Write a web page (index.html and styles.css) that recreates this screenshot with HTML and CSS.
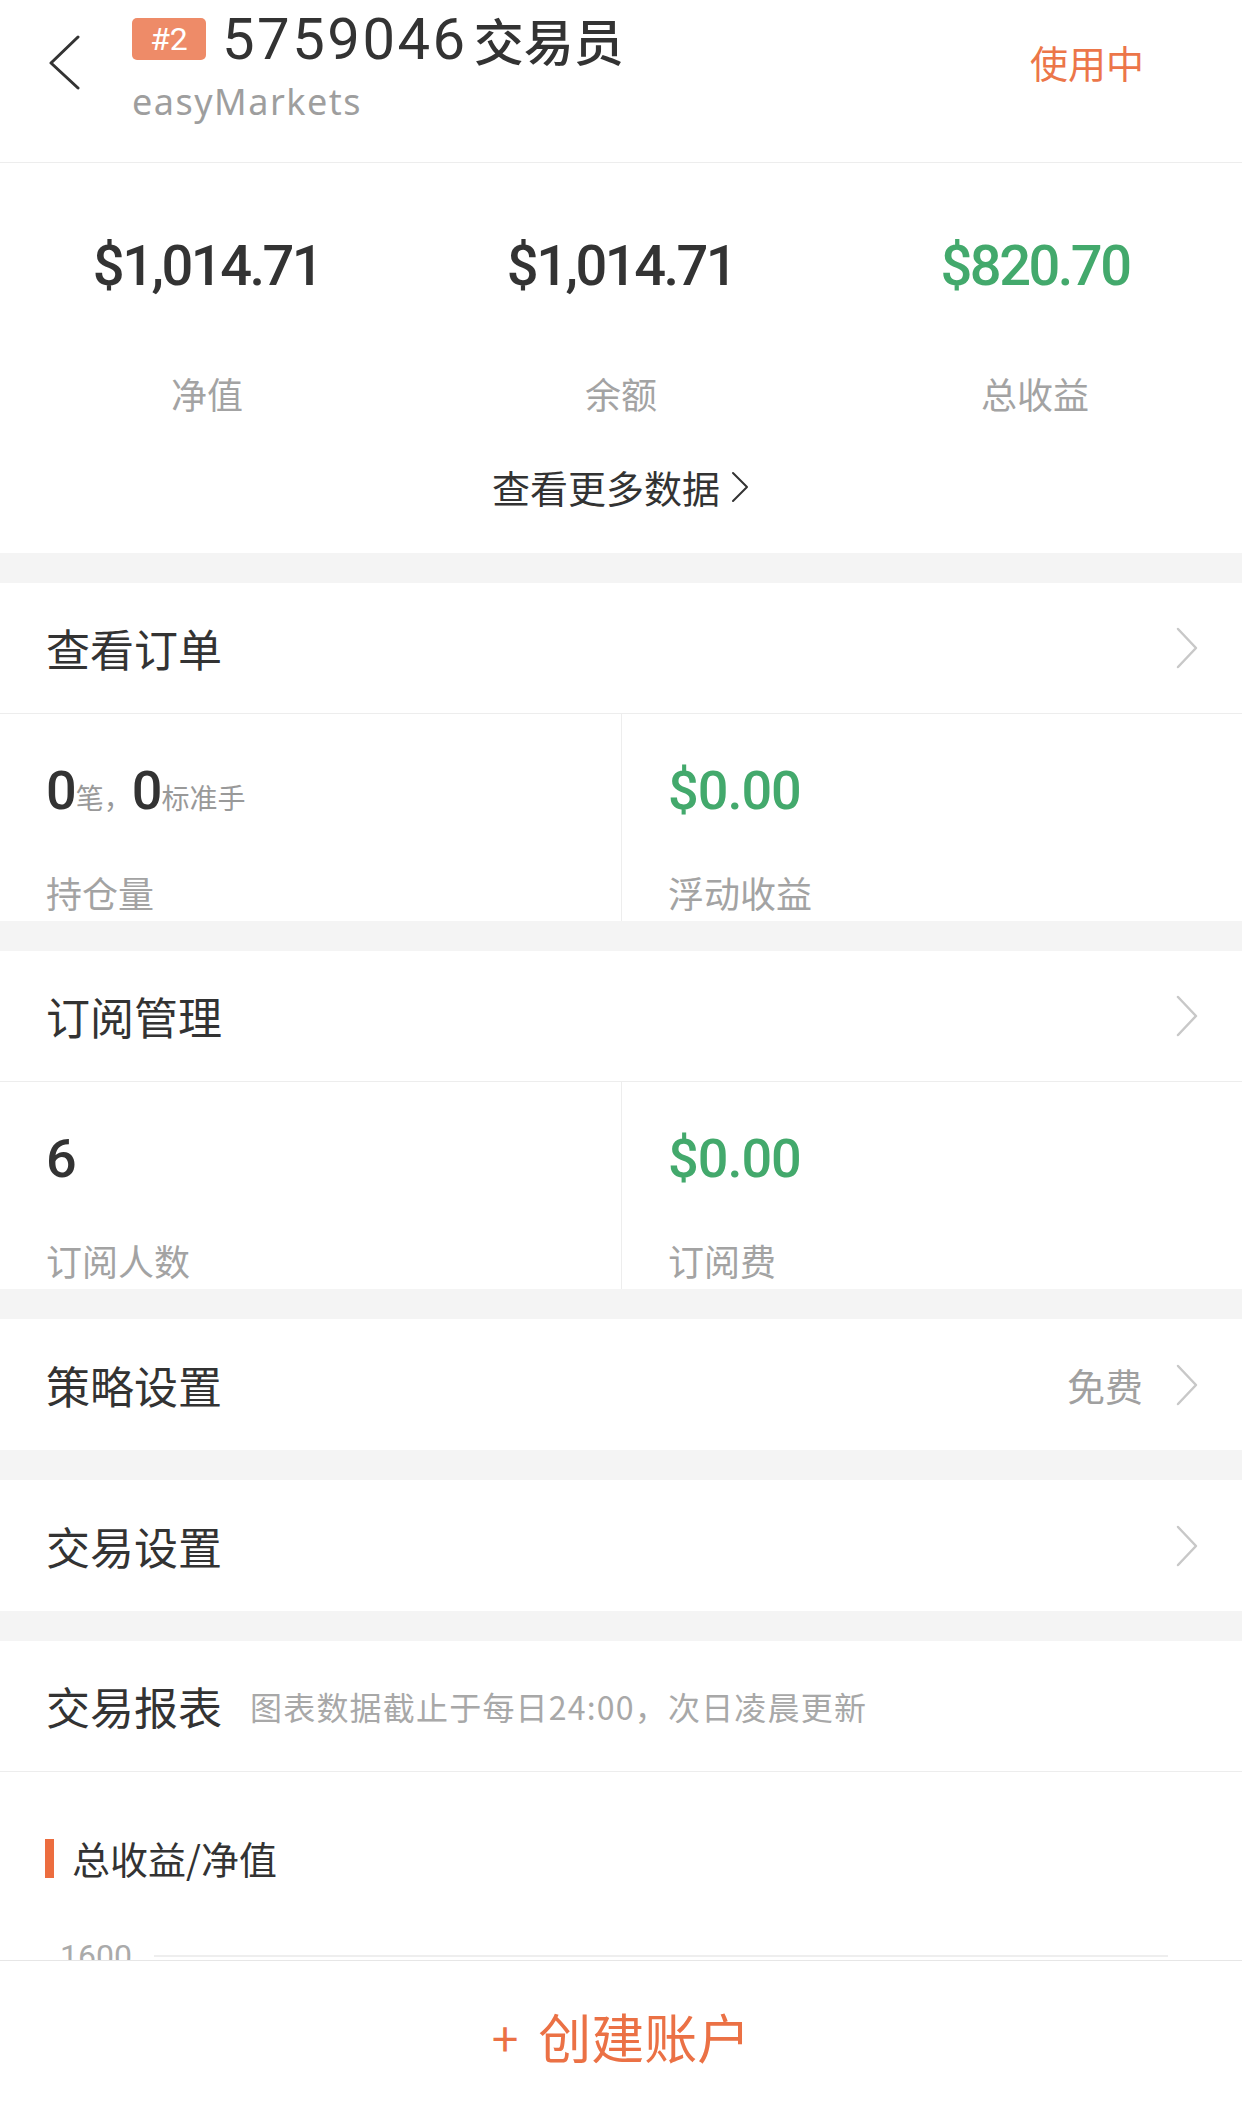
FILE: index.html
```html
<!DOCTYPE html>
<html lang="zh-CN">
<head>
    <meta charset="UTF-8">
    <meta name="viewport" content="width=device-width, initial-scale=1.0">
    <title>账户详情</title>
    <link rel="stylesheet" href="styles.css">
</head>
<body>
<div class="page">
    <div class="scroll">
        <div class="card">
            <header class="top-bar">
                <svg class="back" width="32" height="56" viewBox="0 0 32 56">
                    <path d="M30 2 L3 28 L30 53" fill="none" stroke="#333" stroke-width="3" stroke-linecap="round" stroke-linejoin="round"/>
                </svg>
                <div class="account">
                    <div class="account-title">
                        <span class="badge">#2</span>
                        <span class="account-no">5759046</span>
                        <span class="account-role">交易员</span>
                    </div>
                    <div class="broker">easyMarkets</div>
                </div>
                <div class="status">使用中</div>
            </header>

            <div class="summary">
                <div class="summary-grid">
                    <div class="summary-item">
                        <div class="summary-value">$1,014.71</div>
                        <div class="summary-label">净值</div>
                    </div>
                    <div class="summary-item">
                        <div class="summary-value">$1,014.71</div>
                        <div class="summary-label">余额</div>
                    </div>
                    <div class="summary-item">
                        <div class="summary-value green">$820.70</div>
                        <div class="summary-label">总收益</div>
                    </div>
                </div>
                <div class="more-link">
                    <span>查看更多数据</span>
                    <svg width="20" height="32" viewBox="0 0 20 32">
                        <path d="M3 2 L17 16 L3 30" fill="none" stroke="#333" stroke-width="2" stroke-linecap="round" stroke-linejoin="round"/>
                    </svg>
                </div>
            </div>
        </div>

        <div class="card">
            <div class="cell with-border">
                <span class="cell-title">查看订单</span>
                <svg class="chevron" width="24" height="42" viewBox="0 0 24 42">
                    <path d="M3 2 L21 21 L3 40" fill="none" stroke="#c8c8c8" stroke-width="2.5" stroke-linecap="round" stroke-linejoin="round"/>
                </svg>
            </div>
            <div class="pair">
                <div class="pair-item">
                    <div class="pair-value"><span class="num">0</span><span class="unit">笔，</span><span class="num">0</span><span class="unit">标准手</span></div>
                    <div class="pair-label">持仓量</div>
                </div>
                <div class="pair-item">
                    <div class="pair-value green">$0.00</div>
                    <div class="pair-label">浮动收益</div>
                </div>
            </div>
        </div>

        <div class="card">
            <div class="cell with-border">
                <span class="cell-title">订阅管理</span>
                <svg class="chevron" width="24" height="42" viewBox="0 0 24 42">
                    <path d="M3 2 L21 21 L3 40" fill="none" stroke="#c8c8c8" stroke-width="2.5" stroke-linecap="round" stroke-linejoin="round"/>
                </svg>
            </div>
            <div class="pair">
                <div class="pair-item">
                    <div class="pair-value"><span class="num">6</span></div>
                    <div class="pair-label">订阅人数</div>
                </div>
                <div class="pair-item">
                    <div class="pair-value green">$0.00</div>
                    <div class="pair-label">订阅费</div>
                </div>
            </div>
        </div>

        <div class="card">
            <div class="cell">
                <span class="cell-title">策略设置</span>
                <span class="cell-extra">免费</span>
                <svg class="chevron" width="24" height="42" viewBox="0 0 24 42">
                    <path d="M3 2 L21 21 L3 40" fill="none" stroke="#c8c8c8" stroke-width="2.5" stroke-linecap="round" stroke-linejoin="round"/>
                </svg>
            </div>
        </div>

        <div class="card">
            <div class="cell">
                <span class="cell-title">交易设置</span>
                <svg class="chevron" width="24" height="42" viewBox="0 0 24 42">
                    <path d="M3 2 L21 21 L3 40" fill="none" stroke="#c8c8c8" stroke-width="2.5" stroke-linecap="round" stroke-linejoin="round"/>
                </svg>
            </div>
        </div>

        <div class="card">
            <div class="cell with-border">
                <span class="cell-title">交易报表</span>
                <span class="cell-note">图表数据截止于每日24:00，次日凌晨更新</span>
            </div>
            <div class="chart">
                <div class="chart-title">
                    <span class="chart-bar"></span>
                    <span>总收益/净值</span>
                </div>
                <div class="axis-row">
                    <span class="axis-label">1600</span>
                    <span class="axis-line"></span>
                </div>
            </div>
        </div>
    </div>

    <footer class="footer">
        <span class="plus">+</span>
        <span class="create-btn">创建账户</span>
    </footer>
</div>
</body>
</html>
```

FILE: styles.css
```css
body {
    margin: 0;
    font-family: "Noto Sans CJK SC", sans-serif;
    color: #333;
    background-color: #f4f4f4;
}

.page {
    height: 100vh;
    display: flex;
    flex-direction: column;
}

.scroll {
    flex: 1;
    overflow: hidden;
}

.card {
    background-color: white;
}

.card + .card {
    margin-top: 30px;
}

/* header */
.top-bar {
    display: flex;
    align-items: flex-start;
    height: 162px;
    border-bottom: 1px solid #ededed;
}

.back {
    margin-left: 48px;
    margin-top: 35px;
    flex: none;
}

.account {
    margin-left: 52px;
    margin-top: 9px;
}

.account-title {
    display: flex;
    align-items: center;
    height: 60px;
}

.badge {
    width: 74px;
    height: 42px;
    line-height: 42px;
    text-align: center;
    border-radius: 5px;
    background-color: #ee8b68;
    color: white;
    font-family: Roboto, sans-serif;
    font-size: 32px;
}

.account-no {
    margin-left: 16px;
    font-family: Roboto, sans-serif;
    font-size: 58px;
    line-height: 60px;
    letter-spacing: 2.5px;
}

.account-role {
    margin-left: 6px;
    font-size: 50px;
    line-height: 60px;
    font-weight: 500;
}

.broker {
    margin-top: 11px;
    font-family: "Noto Sans", sans-serif;
    font-size: 36px;
    line-height: 44px;
    letter-spacing: 1.5px;
    color: #9e9e9e;
}

.status {
    margin-left: auto;
    margin-right: 98px;
    margin-top: 40px;
    font-size: 38px;
    line-height: 44px;
    color: #ec7649;
}

/* summary */
.summary {
    padding: 75px 0 46px;
}

.summary-grid {
    display: grid;
    grid-template-columns: repeat(3, 1fr);
    text-align: center;
}

.summary-value {
    font-family: Roboto, sans-serif;
    font-weight: 500;
    font-size: 56px;
    line-height: 56px;
    letter-spacing: -2.5px;
    color: #333;
}

.summary-value.green,
.green {
    color: #43a96c;
}

.summary-label {
    margin-top: 79px;
    font-size: 36px;
    line-height: 40px;
    color: #a3a3a3;
}

.more-link {
    margin-top: 54px;
    display: flex;
    justify-content: center;
    align-items: center;
    gap: 10px;
    font-size: 38px;
    line-height: 40px;
}

/* list cells */
.cell {
    display: flex;
    align-items: center;
    height: 131px;
    box-sizing: border-box;
    padding: 0 43px 0 46px;
}

.with-border {
    border-bottom: 1px solid #ededed;
}

.cell-title {
    font-size: 44px;
    line-height: 48px;
}

.cell-extra {
    margin-left: auto;
    margin-right: 32px;
    font-size: 38px;
    color: #a0a0a0;
}

.chevron {
    flex: none;
}

.cell-title + .chevron {
    margin-left: auto;
}

.cell-note {
    margin-left: 28px;
    font-size: 32px;
    letter-spacing: 1.2px;
    color: #a8a8a8;
}

/* two column stats */
.pair {
    display: grid;
    grid-template-columns: 1fr 1fr;
}

.pair-item {
    padding: 49px 0 9px 46px;
}

.pair-item + .pair-item {
    border-left: 1px solid #ededed;
}

.pair-value {
    display: flex;
    align-items: baseline;
    height: 56px;
    font-family: Roboto, sans-serif;
    font-weight: 500;
    font-size: 54px;
    line-height: 56px;
    letter-spacing: -1px;
}

.unit {
    font-family: "Noto Sans CJK SC", sans-serif;
    font-weight: 400;
    font-size: 28px;
    line-height: 28px;
    letter-spacing: 0;
    color: #999;
}

.pair-label {
    margin-top: 53px;
    font-size: 36px;
    line-height: 40px;
    color: #a3a3a3;
}

/* chart */
.chart {
    padding: 66px 74px 0 45px;
}

.chart-title {
    display: flex;
    align-items: center;
    font-size: 38px;
    line-height: 40px;
}

.chart-bar {
    width: 9px;
    height: 39px;
    margin-right: 18px;
    background-color: #ec6d3f;
}

.axis-row {
    margin-top: 58px;
    display: flex;
    align-items: center;
    padding-left: 15px;
}

.axis-label {
    font-family: Roboto, sans-serif;
    font-size: 32px;
    line-height: 40px;
    color: #aaa;
}

.axis-line {
    flex: 1;
    height: 2px;
    margin-left: 22px;
    background-color: #eeeeee;
}

/* bottom bar */
.footer {
    flex: none;
    height: 149px;
    border-top: 1px solid #e6e6e6;
    background-color: white;
    display: flex;
    align-items: center;
    justify-content: center;
    color: #eb7145;
}

.plus {
    margin-right: 20px;
    font-size: 48px;
    line-height: 56px;
}

.create-btn {
    font-size: 53px;
    line-height: 56px;
}
```
